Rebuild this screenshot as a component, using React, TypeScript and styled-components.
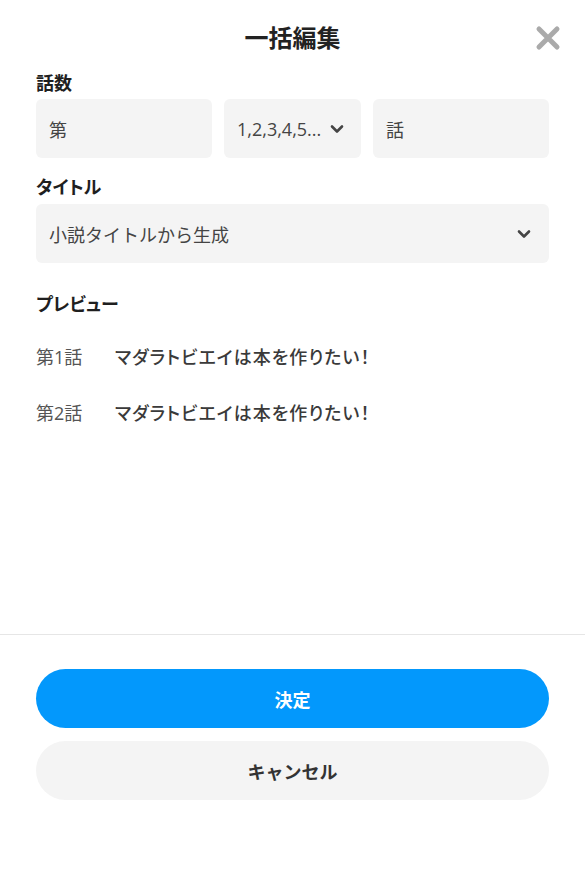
import styled, { createGlobalStyle } from 'styled-components';

const GlobalStyle = createGlobalStyle`
  html, body {
    margin: 0;
    padding: 0;
    background: #ffffff;
  }
  body {
    font-family: "Open Sans", "Noto Sans CJK JP", sans-serif;
    color: #222;
  }
`;

const Page = styled.div`
  display: flex;
  flex-direction: column;
  width: 585px;
  height: 885px;
  box-sizing: border-box;
`;

const Main = styled.div`
  flex: 1;
  display: flex;
  flex-direction: column;
  padding: 20px 36px 0;
`;

const Header = styled.div`
  display: grid;
  grid-template-columns: 1fr auto 1fr;
  align-items: center;
  height: 36px;
`;

const Title = styled.h1`
  grid-column: 2;
  margin: 0;
  font-size: 24px;
  line-height: 36px;
  font-weight: 700;
  color: #222;
`;

const CloseButton = styled.button`
  grid-column: 3;
  justify-self: end;
  display: flex;
  align-items: center;
  justify-content: center;
  width: 28px;
  height: 28px;
  margin-right: -13px;
  padding: 0;
  border: none;
  background: none;
  cursor: pointer;
`;

const Section = styled.div<{ $top: number }>`
  display: flex;
  flex-direction: column;
  margin-top: ${({ $top }) => $top}px;
`;

const Label = styled.div<{ $gap?: number }>`
  font-size: 18px;
  line-height: 26px;
  font-weight: 700;
  color: #1f1f1f;
  font-feature-settings: "palt";
  margin-bottom: ${({ $gap }) => $gap ?? 3}px;
`;

const FieldRow = styled.div`
  display: grid;
  grid-template-columns: 176px 1fr 176px;
  gap: 12px;
`;

const Field = styled.div`
  display: flex;
  align-items: center;
  height: 59px;
  padding: 0 13px;
  box-sizing: border-box;
  background: #f4f4f4;
  border-radius: 6px;
  font-size: 18px;
  color: #444;
  min-width: 0;
`;

const SelectField = styled(Field)<{ $pr: number }>`
  justify-content: space-between;
  gap: 6px;
  padding-right: ${({ $pr }) => $pr}px;
`;

const SelectText = styled.span`
  white-space: nowrap;
  overflow: hidden;
`;

const PreviewList = styled.div`
  display: flex;
  flex-direction: column;
  gap: 30px;
  margin-top: 27px;
`;

const PreviewRow = styled.div`
  display: flex;
  align-items: center;
  font-size: 18px;
  line-height: 26px;
`;

const EpisodeNo = styled.span`
  width: 79px;
  color: #555;
`;

const EpisodeTitle = styled.span`
  color: #3a3a3a;
  font-weight: 500;
  font-feature-settings: "palt";
  letter-spacing: 1px;
`;

const Footer = styled.div`
  display: flex;
  flex-direction: column;
  gap: 13px;
  border-top: 1px solid #e6e6e6;
  padding: 34px 36px 85px;
`;

const Button = styled.button<{ $primary?: boolean }>`
  height: 59px;
  border: none;
  border-radius: 30px;
  font-family: inherit;
  font-size: 18px;
  font-weight: 700;
  background: ${({ $primary }) => ($primary ? '#0398fc' : '#f4f4f4')};
  color: ${({ $primary }) => ($primary ? '#ffffff' : '#333')};
  cursor: pointer;
`;

const Chevron = () => (
  <svg width="14" height="10" viewBox="0 0 14 10" fill="none">
    <path d="M2 2.5 L7 7.5 L12 2.5" stroke="#444" strokeWidth="2.6" strokeLinecap="round" strokeLinejoin="round" />
  </svg>
);

const CloseIcon = () => (
  <svg width="26" height="26" viewBox="0 0 26 26" fill="none">
    <path d="M4 4 L22 22 M22 4 L4 22" stroke="#aaaaaa" strokeWidth="5" strokeLinecap="round" />
  </svg>
);

const episodes = [1, 2];

export default function App() {
  return (
    <Page>
      <GlobalStyle />
      <Main>
        <Header>
          <Title>一括編集</Title>
          <CloseButton aria-label="閉じる">
            <CloseIcon />
          </CloseButton>
        </Header>

        <Section $top={14}>
          <Label>話数</Label>
          <FieldRow>
            <Field>第</Field>
            <SelectField $pr={17}>
              <SelectText>1,2,3,4,5...</SelectText>
              <Chevron />
            </SelectField>
            <Field>話</Field>
          </FieldRow>
        </Section>

        <Section $top={16}>
          <Label $gap={4}>タイトル</Label>
          <SelectField $pr={18}>
            <SelectText>小説タイトルから生成</SelectText>
            <Chevron />
          </SelectField>
        </Section>

        <Section $top={28}>
          <Label $gap={0}>プレビュー</Label>
          <PreviewList>
            {episodes.map(n => (
              <PreviewRow key={n}>
                <EpisodeNo>第{n}話</EpisodeNo>
                <EpisodeTitle>マダラトビエイは本を作りたい！</EpisodeTitle>
              </PreviewRow>
            ))}
          </PreviewList>
        </Section>
      </Main>

      <Footer>
        <Button $primary>決定</Button>
        <Button>キャンセル</Button>
      </Footer>
    </Page>
  );
}
